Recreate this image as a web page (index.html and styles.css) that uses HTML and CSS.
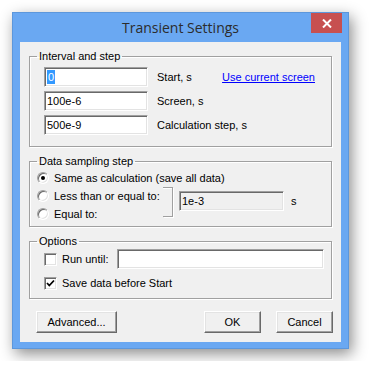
FILE: index.html
```html
<!DOCTYPE html>
<html lang="en">
<head>
  <meta charset="UTF-8">
  <title>Transient Settings</title>
  <link rel="stylesheet" href="styles.css">
</head>
<body>
  <div class="window">
    <div class="title-bar">
      <span></span>
      <div class="title">Transient Settings</div>
      <div class="close-button">
        <svg width="10" height="9" viewBox="0 0 10 9"><path d="M1 0.5 L9 8.5 M9 0.5 L1 8.5" stroke="#fff" stroke-width="2" fill="none"/></svg>
      </div>
    </div>

    <div class="client">
      <fieldset class="group">
        <legend>Interval and step</legend>
        <div class="interval-grid">
          <div class="field"><span class="selected">0</span></div>
          <div class="label">Start, s</div>
          <a class="link">Use current screen</a>
          <div class="field">100e-6</div>
          <div class="label">Screen, s</div>
          <span></span>
          <div class="field">500e-9</div>
          <div class="label">Calculation step, s</div>
        </div>
      </fieldset>

      <fieldset class="group">
        <legend>Data sampling step</legend>
        <div class="sampling-grid">
          <div class="option option-first"><span class="radio checked"></span>Same as calculation (save all data)</div>
          <div class="option"><span class="radio"></span>Less than or equal to:</div>
          <div class="bracket"></div>
          <div class="field field-disabled">1e-3</div>
          <div class="unit">s</div>
          <div class="option"><span class="radio"></span>Equal to:</div>
        </div>
      </fieldset>

      <fieldset class="group">
        <legend>Options</legend>
        <div class="options-grid">
          <div class="option"><span class="checkbox"></span>Run until:</div>
          <div class="field field-wide"></div>
          <div class="option option-wide">
            <span class="checkbox">
              <svg width="9" height="9" viewBox="0 0 9 9"><path d="M1 4 L3.3 6.5 L8 1.5" stroke="#000" stroke-width="1.8" fill="none"/></svg>
            </span>Save data before Start
          </div>
        </div>
      </fieldset>

      <div class="button-row">
        <button class="button button-advanced">Advanced...</button>
        <span class="spacer"></span>
        <button class="button">OK</button>
        <button class="button">Cancel</button>
      </div>
    </div>
  </div>
</body>
</html>
```

FILE: styles.css
```css
body {
  margin: 0;
  padding: 12px;
  background: #fff;
  font-family: "Liberation Sans", Arial, sans-serif;
  font-size: 11px;
  color: #000;
}

.window {
  box-sizing: border-box;
  width: 337px;
  height: 337px;
  background: #6aa8f2;
  border: 1px solid #5c97dc;
  padding: 0 7px 6px;
  display: flex;
  flex-direction: column;
  box-shadow: 3px 5px 14px rgba(0, 0, 0, 0.45);
}

.title-bar {
  height: 29px;
  display: grid;
  grid-template-columns: 1fr auto 1fr;
  align-items: start;
}

.title {
  font-family: "Open Sans", sans-serif;
  font-size: 14px;
  color: #2c2c2c;
  padding-top: 5px;
}

.close-button {
  justify-self: end;
  width: 31px;
  height: 20px;
  margin-right: -1px;
  background: #c75050;
  display: flex;
  align-items: center;
  justify-content: center;
}

.client {
  flex: 1;
  background: #f0f0f0;
  padding: 8px 9px 9px;
  display: flex;
  flex-direction: column;
}

.group {
  margin: 0;
  padding: 0;
  min-width: 0;
  border: 1px solid #a0a0a0;
  box-shadow: inset 1px 1px 0 #fff, 1px 1px 0 #fff;
}

.group + .group {
  margin-top: 8px;
}

.group legend {
  margin-left: 7px;
  padding: 0 2px;
  line-height: 13px;
}

.interval-grid {
  display: grid;
  grid-template-columns: 104px minmax(0, 1fr) auto;
  grid-template-rows: 20px 20px 20px;
  column-gap: 9px;
  row-gap: 4px;
  align-items: center;
  padding: 4px 16px 11px 14px;
}

.label {
  white-space: nowrap;
}

.field {
  box-sizing: border-box;
  height: 20px;
  background: #fff;
  border: 1px solid;
  border-color: #a0a0a0 #fff #fff #a0a0a0;
  box-shadow: inset 1px 1px 0 #696969, inset -1px -1px 0 #e3e3e3;
  padding: 0 2px;
  line-height: 18px;
  white-space: nowrap;
}

.field-disabled {
  background: #f0f0f0;
  grid-column: 3;
  grid-row: 2 / 4;
  align-self: start;
  margin-top: 4px;
}

.selected {
  background: #3399ff;
  color: #fff;
  padding: 1px 1px;
}

.link {
  color: #0000ff;
  text-decoration: underline;
}

.sampling-grid {
  display: grid;
  grid-template-columns: 126px 16px 105px auto;
  grid-template-rows: 19px 18px 18px;
  padding: 0 0 3px 7px;
}

.option {
  display: flex;
  align-items: center;
  white-space: nowrap;
}

.sampling-grid .option {
  grid-column: 1;
}

.sampling-grid .option-first {
  grid-column: 1 / 5;
}

.radio {
  box-sizing: border-box;
  width: 12px;
  height: 12px;
  margin-right: 5px;
  border-radius: 50%;
  background: #fff;
  border: 1px solid;
  border-color: #a0a0a0 #fff #fff #a0a0a0;
  box-shadow: inset 1px 1px 0 #696969, inset -1px -1px 0 #e3e3e3;
  display: flex;
  align-items: center;
  justify-content: center;
}

.radio.checked::after {
  content: "";
  width: 4px;
  height: 4px;
  border-radius: 50%;
  background: #000;
}

.bracket {
  grid-column: 2;
  grid-row: 2 / 4;
  box-sizing: border-box;
  width: 10px;
  height: 30px;
  border: 1px solid #a0a0a0;
  border-left: none;
  box-shadow: inset 0 1px 0 #fff, 1px 1px 0 #fff;
}

.unit {
  grid-column: 4;
  grid-row: 2 / 4;
  align-self: start;
  margin-top: 4px;
  line-height: 20px;
  padding-left: 7px;
}

.options-grid {
  display: grid;
  grid-template-columns: 73px 1fr;
  grid-template-rows: 20px 20px;
  row-gap: 4px;
  padding: 1px 7px 5px 14px;
}

.option-wide {
  grid-column: 1 / 3;
}

.checkbox {
  box-sizing: border-box;
  width: 13px;
  height: 13px;
  margin-right: 5px;
  background: #fff;
  border: 1px solid;
  border-color: #a0a0a0 #fff #fff #a0a0a0;
  box-shadow: inset 1px 1px 0 #696969, inset -1px -1px 0 #e3e3e3;
  display: flex;
  align-items: center;
  justify-content: center;
}

.button-row {
  margin: auto -1px 0 7px;
  display: flex;
  gap: 15px;
}

.spacer {
  flex: 1;
}

.button {
  box-sizing: border-box;
  width: 57px;
  height: 22px;
  padding: 0;
  font-family: "Liberation Sans", Arial, sans-serif;
  font-size: 11px;
  color: #000;
  background: #f0f0f0;
  border: 1px solid;
  border-color: #fff #696969 #696969 #fff;
  box-shadow: inset -1px -1px 0 #a0a0a0, inset 1px 1px 0 #e3e3e3;
}

.button-advanced {
  width: 81px;
}
```
